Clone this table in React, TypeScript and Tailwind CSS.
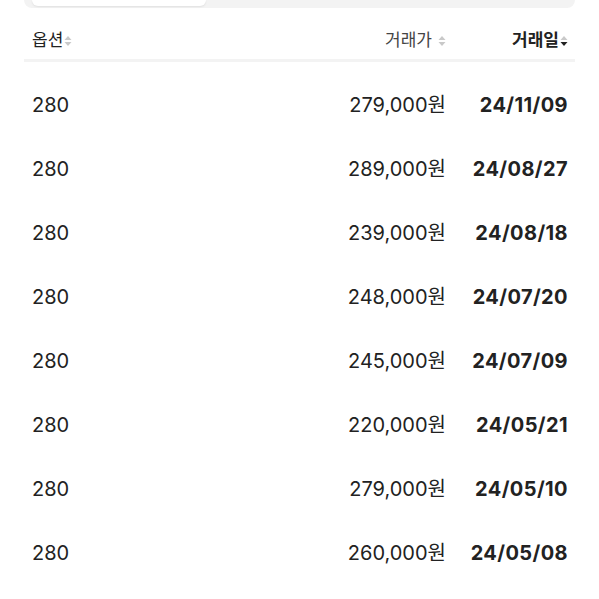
import React from "react";

const rows = [
  { option: "280", price: "279,000원", date: "24/11/09" },
  { option: "280", price: "289,000원", date: "24/08/27" },
  { option: "280", price: "239,000원", date: "24/08/18" },
  { option: "280", price: "248,000원", date: "24/07/20" },
  { option: "280", price: "245,000원", date: "24/07/09" },
  { option: "280", price: "220,000원", date: "24/05/21" },
  { option: "280", price: "279,000원", date: "24/05/10" },
  { option: "280", price: "260,000원", date: "24/05/08" },
];

function SortIcon({ active }: { active?: boolean }) {
  return (
    <svg width="8" height="12" viewBox="0 0 8 12" className="ml-[1px] shrink-0">
      <path d="M4 1 L7.5 5 H0.5 Z" fill="#c9c9c9" />
      <path d="M4 11 L7.5 7 H0.5 Z" fill={active ? "#222" : "#c9c9c9"} />
    </svg>
  );
}

export default function App() {
  return (
    <div
      className="h-[599px] w-[599px] overflow-hidden bg-white text-[#222]"
      style={{ fontFamily: 'Inter, "Noto Sans CJK KR", sans-serif' }}
    >
      <div className="mx-[24px] h-[8px] rounded-b-[10px] bg-[#f3f3f3] px-[8px]">
        <div className="h-[6px] w-[174px] rounded-b-[10px] bg-white shadow-[0_1px_2px_rgba(0,0,0,0.08)]" />
      </div>

      <div className="mx-[24px]">
        <div className="grid h-[54px] grid-cols-[1fr_auto_122px] items-center border-b-[3px] border-[#f3f3f3] pl-[8px] pr-[7px] pt-[14px] text-[17px]">
          <div className="flex items-center">
            옵션
            <SortIcon />
          </div>
          <div className="flex items-center justify-end text-[#444]">
            거래가
            <span className="ml-[5px]">
              <SortIcon />
            </span>
          </div>
          <div className="flex items-center justify-end font-bold">
            거래일
            <SortIcon active />
          </div>
        </div>

        <div className="pt-[11px]">
          {rows.map((r, i) => (
            <div
              key={i}
              className="grid h-[64px] grid-cols-[1fr_auto_122px] items-center pl-[8px] pr-[7px] text-[20px]"
            >
              <div>{r.option}</div>
              <div className="text-right">{r.price}</div>
              <div className="text-right font-bold tracking-[0.4px]">{r.date}</div>
            </div>
          ))}
        </div>
      </div>
    </div>
  );
}
